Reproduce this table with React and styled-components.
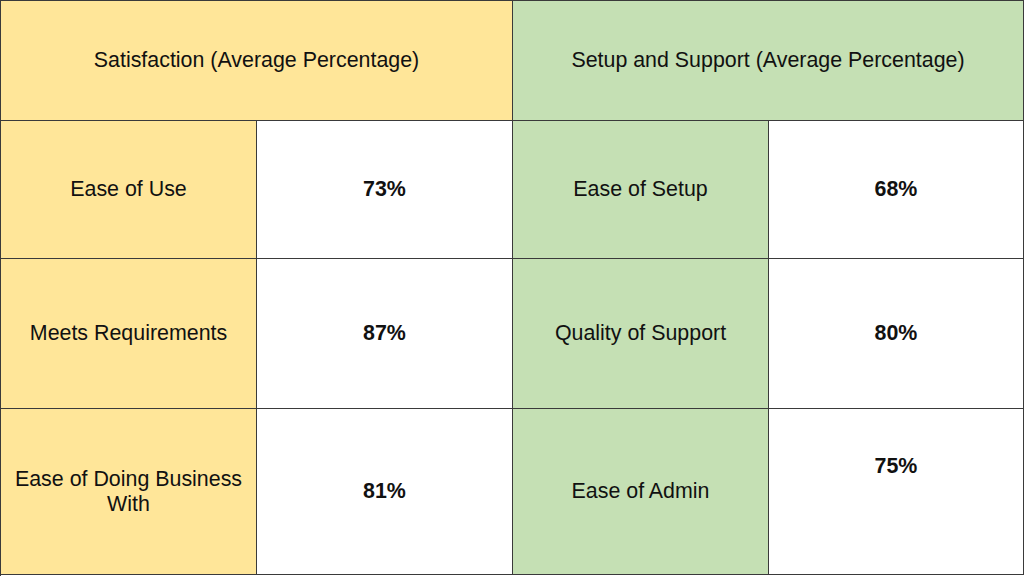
import React from "react";
import styled, { createGlobalStyle } from "styled-components";

const PALETTE = {
  yellow: "#FFE699",
  green: "#C5E0B4",
  white: "#FFFFFF",
  line: "#3a3a3a",
  text: "#111111",
};

const GlobalStyle = createGlobalStyle`
  html, body {
    margin: 0;
    padding: 0;
    background: #ffffff;
  }
  body {
    font-family: "Liberation Sans", Arial, sans-serif;
    color: ${PALETTE.text};
  }
`;

const TableEl = styled.div`
  display: grid;
  grid-template-columns: 256px 256px 256px 255px;
  grid-template-rows: 120px 138px 150px 166px;
  width: 1024px;
  height: 576px;
  box-sizing: border-box;
  border-top: 1px solid ${PALETTE.line};
  border-left: 1px solid ${PALETTE.line};
`;

const CellEl = styled.div`
  display: flex;
  justify-content: center;
  align-items: ${(p) => (p.$top ? "flex-start" : "center")};
  padding: ${(p) => (p.$top ? "45px 8px 0" : "0 8px")};
  box-sizing: border-box;
  text-align: center;
  grid-column: span ${(p) => p.$span || 1};
  background: ${(p) => PALETTE[p.$tone || "white"]};
  border-right: 1px solid ${PALETTE.line};
  border-bottom: 1px solid ${PALETTE.line};
  font-size: 21.4px;
  line-height: 25px;
  font-weight: ${(p) => (p.$bold ? 700 : 400)};
`;

const sections = [
  {
    tone: "yellow",
    title: "Satisfaction (Average Percentage)",
  },
  {
    tone: "green",
    title: "Setup and Support (Average Percentage)",
  },
];

const rows = [
  [
    { label: "Ease of Use", value: "73%" },
    { label: "Ease of Setup", value: "68%" },
  ],
  [
    { label: "Meets Requirements", value: "87%" },
    { label: "Quality of Support", value: "80%" },
  ],
  [
    { label: "Ease of Doing Business With", value: "81%" },
    { label: "Ease of Admin", value: "75%", top: true },
  ],
];

export default function App() {
  return (
    <>
      <GlobalStyle />
      <TableEl>
        {sections.map((s) => (
          <CellEl key={s.title} $span={2} $tone={s.tone}>
            {s.title}
          </CellEl>
        ))}
        {rows.map((row, i) =>
          row.map((item, j) => (
            <React.Fragment key={`${i}-${j}`}>
              <CellEl $tone={sections[j].tone}>{item.label}</CellEl>
              <CellEl $bold $top={item.top}>
                {item.value}
              </CellEl>
            </React.Fragment>
          ))
        )}
      </TableEl>
    </>
  );
}
